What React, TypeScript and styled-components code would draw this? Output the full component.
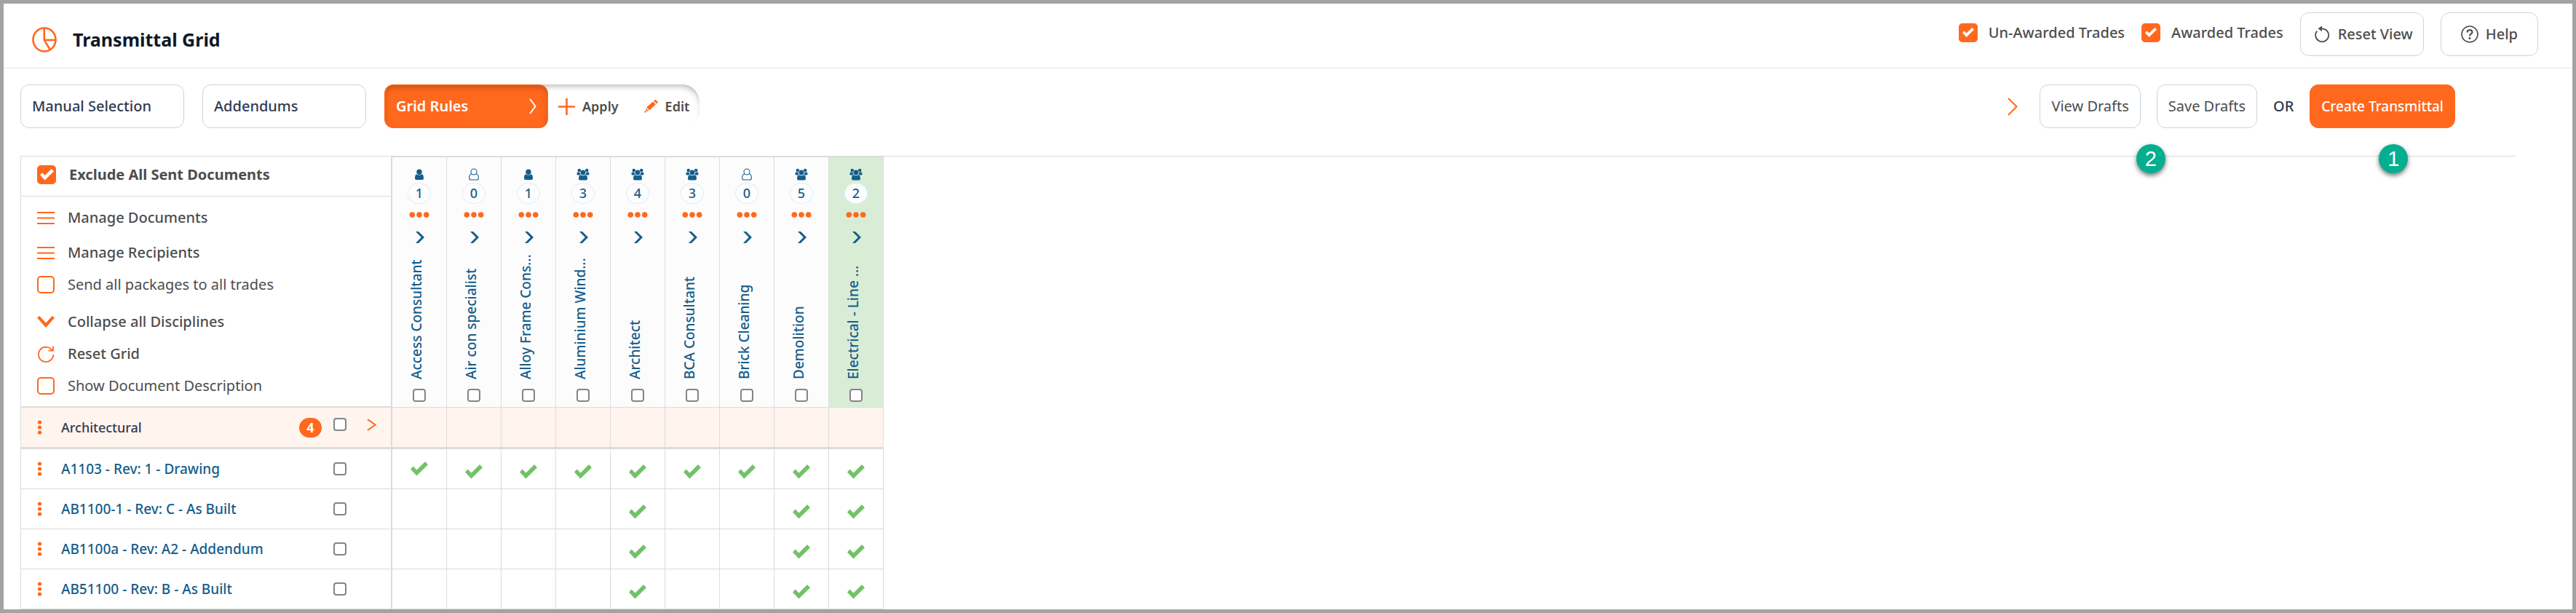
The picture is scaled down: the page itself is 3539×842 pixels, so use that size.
import React from "react";
import styled, { createGlobalStyle } from "styled-components";

const c = {
  orange: "#ff681d",
  navy: "#155d8b",
  ink: "#2f3a52",
  grey: "#4d4d4d",
  line: "#dcdcdc",
  outline: "#cdd2de",
  green: "#72c267",
  teal: "#06ae90",
};

const GlobalStyle = createGlobalStyle`
  *, *::before, *::after { box-sizing: border-box; }
  body {
    margin: 0;
    background: #fff;
    color: ${c.grey};
    font-family: "Noto Sans", "Open Sans", sans-serif;
    font-size: 20px;
    font-weight: 500;
    line-height: 28px;
  }
  button { font: inherit; color: inherit; cursor: pointer; }
  svg { display: block; flex: none; }
`;

const Frame = styled.main`
  min-height: 100vh;
  border: 5px solid #a3a3a3;
`;

/* ---------- header ---------- */

const Header = styled.header`
  display: flex;
  justify-content: space-between;
  padding: 12px 47px 16px 39px;
  border-bottom: 1px solid #e4e4e4;
`;

const Brand = styled.div`
  display: flex;
  align-items: center;
  gap: 22px;
  padding-top: 14px;
`;

const Title = styled.h1`
  margin: 0;
  color: #0e1826;
  font-size: 25px;
  font-weight: 700;
  line-height: 32px;
`;

const HeaderActions = styled.div`
  display: flex;
  align-items: center;
  gap: 23px;
`;

const FilterLabel = styled.label`
  display: flex;
  align-items: center;
  gap: 15px;
  padding-bottom: 4px;
`;

/* ---------- buttons ---------- */

const Button = styled.button<{ $primary?: boolean; $padding?: string }>`
  display: flex;
  align-items: center;
  gap: 10px;
  height: 60px;
  padding: ${(p) => p.$padding ?? "0 15px"};
  border: 1px solid ${(p) => (p.$primary ? c.orange : c.outline)};
  border-radius: 12px;
  background: ${(p) => (p.$primary ? c.orange : "#fff")};
  color: ${(p) => (p.$primary ? "#fff" : c.grey)};
  white-space: nowrap;
`;

const QuietButton = styled(Button)`
  font-weight: 400;
`;

const CreateButton = styled(Button)`
  font-size: 19px;
`;

const ModeButton = styled(Button)<{ $active?: boolean }>`
  position: relative;
  z-index: 1;
  justify-content: space-between;
  width: 225px;
  color: ${(p) => (p.$active ? "#fff" : c.ink)};
  font-weight: ${(p) => (p.$active ? 600 : 500)};
  box-shadow: ${(p) => (p.$active ? "inset 0 5px 8px -2px rgba(90, 40, 10, 0.35)" : "none")};
`;

const BareButton = styled.button`
  display: flex;
  align-items: center;
  padding: 0;
  border: 0;
  background: none;
`;

/* ---------- toolbar ---------- */

const Toolbar = styled.div`
  display: flex;
  justify-content: space-between;
  padding: 22px 161px 38px 23px;
`;

const Modes = styled.div`
  display: flex;
  gap: 25px;
`;

const RuleGroup = styled.div`
  display: flex;
`;

const RuleActions = styled.div`
  display: flex;
  align-items: center;
  gap: 35px;
  margin-left: -20px;
  padding: 0 14px 0 34px;
  border-radius: 0 24px 24px 0;
  box-shadow: inset -3px 8px 9px -6px rgba(0, 0, 0, 0.3);
`;

const RuleAction = styled(BareButton)`
  gap: 10px;
  font-size: 18px;
  font-weight: 600;
`;

const DraftActions = styled.div`
  display: flex;
  align-items: center;
  gap: 22px;
`;

const ExpandButton = styled(BareButton)`
  margin-right: 8px;
`;

const Or = styled.span`
  color: ${c.ink};
`;

const Marked = styled.div`
  position: relative;
`;

const Marker = styled.span<{ $left: number }>`
  position: absolute;
  top: 82px;
  left: ${(p) => p.$left}px;
  width: 40px;
  height: 40px;
  border-radius: 50%;
  background: ${c.teal};
  box-shadow: 0 3px 6px rgba(0, 0, 0, 0.55);
  color: #fff;
  font: 400 29px/41px "Liberation Sans", sans-serif;
  text-align: center;
`;

/* ---------- check boxes ---------- */

const CheckWrap = styled.span`
  display: grid;
  place-items: center;
  flex: none;

  > * { grid-area: 1 / 1; }
  > svg { pointer-events: none; z-index: 1; }
`;

const BrandCheck = styled.input<{ $size: number }>`
  appearance: none;
  width: ${(p) => p.$size}px;
  height: ${(p) => p.$size}px;
  margin: 0;
  border: 2px solid ${c.orange};
  border-radius: 5px;
  background: #fff;

  &:checked { background: ${c.orange}; }
  &:not(:checked) + svg { visibility: hidden; }
`;

const PlainCheck = styled.input`
  appearance: none;
  flex: none;
  width: 18px;
  height: 18px;
  margin: 0;
  border: 2px solid #858585;
  border-radius: 4px;
  background: #fff;

  &:checked { background: ${c.navy}; }
`;

/* ---------- grid ---------- */

const GridArea = styled.section`
  margin: 0 78px 0 23px;
  border-top: 1px solid ${c.line};
`;

const Grid = styled.table`
  width: 1186px;
  table-layout: fixed;
  border-collapse: separate;
  border-spacing: 0;
`;

const LabelCol = styled.col`
  width: 511px;
`;

const PanelCell = styled.td`
  height: 345px;
  padding: 0;
  border: solid ${c.line};
  border-width: 0 2px 2px 1px;
  vertical-align: top;
`;

const ExcludeLabel = styled.label`
  display: flex;
  align-items: center;
  gap: 18px;
  height: 55px;
  padding: 0 22px 4px;
  border-bottom: 1px solid ${c.line};
  font-weight: 700;
`;

const Menu = styled.ul`
  margin: 0;
  padding: 7px 22px 0;
  list-style: none;
`;

const MenuItem = styled.li<{ $gap?: number }>`
  display: flex;
  align-items: center;
  height: 44px;
  margin-top: ${(p) => p.$gap ?? 0}px;
`;

const MenuButton = styled(BareButton)`
  gap: 18px;
`;

const MenuLabel = styled.label`
  display: flex;
  align-items: center;
  gap: 18px;
  font-weight: 400;
`;

const TradeHead = styled.th<{ $highlight: boolean }>`
  padding: 0;
  border: solid ${c.line};
  border-width: 1px 1px 1px 0;
  background: ${(p) => (p.$highlight ? "#d9edd6" : "#fcfcfc")};
  color: ${c.navy};
  font-weight: 500;
  vertical-align: bottom;
`;

const TradeStack = styled.div`
  display: flex;
  flex-direction: column;
  align-items: center;
  padding-bottom: 7px;
`;

const Count = styled.span`
  height: 29px;
  margin: 3px 0 11px;
  padding: 0 10px;
  border: 1px solid #dceffa;
  border-radius: 50%;
  background: #fdfdfe;
  font-size: 18px;
  line-height: 27px;
`;

const ExpandTrade = styled(BareButton)`
  margin: 19px 0 11px 2px;
`;

const TradeName = styled.span`
  height: 176px;
  margin: 0 8px 13px 0;
  font-size: 19px;
  line-height: 24px;
  text-align: left;
  white-space: nowrap;
  writing-mode: vertical-rl;
  transform: rotate(180deg);
`;

const RowHead = styled.th<{ $group?: boolean }>`
  height: ${(p) => (p.$group ? 57 : 55)}px;
  padding: 0 0 0 22px;
  border: solid ${c.line};
  border-width: 0 2px ${(p) => (p.$group ? 3 : 1)}px 1px;
  background: ${(p) => (p.$group ? "#fff4ee" : "#fff")};
  color: ${(p) => (p.$group ? "#343a55" : c.navy)};
  font-size: ${(p) => (p.$group ? 18 : 19)}px;
  font-weight: 500;
  text-align: left;
`;

const RowLine = styled.div`
  display: flex;
  align-items: center;
`;

const RowName = styled.span`
  flex: 1;
  margin-left: 26px;
`;

const RowTools = styled.span<{ $raised?: boolean }>`
  display: flex;
  align-items: center;
  gap: 28px;
  width: 79px;
  margin-left: 16px;
  padding-bottom: ${(p) => (p.$raised ? 8 : 0)}px;
`;

const GroupCount = styled.span`
  width: 31px;
  height: 27px;
  border-radius: 14px;
  background: ${c.orange};
  color: #fff;
  font-size: 18px;
  font-weight: 700;
  line-height: 27px;
  text-align: center;
`;

const Cell = styled.td<{ $group?: boolean; $low?: boolean }>`
  padding: ${(p) => (p.$low ? "8px 0 0" : "0")};
  border: solid ${c.line};
  border-width: 0 1px ${(p) => (p.$group ? 3 : 1)}px 0;
  background: ${(p) => (p.$group ? "#fff4ee" : "#fff")};

  > svg { margin: 0 auto; }
`;

/* ---------- icons ---------- */

const Tick = ({ w, color }: { w: number; color: string }) => (
  <svg width={w} height={(w * 20) / 24} viewBox="0 0 24 20" fill={color}>
    <path d="M0 10.5 3.6 6.6 8.5 11.4 20 0 24 4.2 8.4 19.6Z" />
  </svg>
);

const PieIcon = () => (
  <svg width="34" height="35" viewBox="0 0 34 35" fill="none" stroke={c.orange} strokeWidth="2.6">
    <ellipse cx="17" cy="17.5" rx="15.5" ry="16" />
    <path d="M16.8 1.5V18L24.6 31M16.8 18H32.5" />
  </svg>
);

const UndoIcon = () => (
  <svg width="22" height="24" viewBox="0 0 22 24" fill="none" stroke={c.grey} strokeWidth="1.8">
    <path d="M3.2 7.6A9 9 0 1 0 10 4.3" />
    <path d="M4.6 4.2 10 .6v7.6z" fill={c.grey} stroke="none" />
  </svg>
);

const HelpIcon = () => (
  <svg width="24" height="24" viewBox="0 0 24 24" fill="none" stroke={c.grey} strokeWidth="1.6">
    <circle cx="12" cy="12" r="11" />
    <path d="M8.6 9.4C8.6 5.2 15.4 5.2 15.4 9.2 15.4 11.8 12 11.6 12 14.4" strokeWidth="2.2" />
    <circle cx="12" cy="17.4" r="1.5" fill={c.grey} stroke="none" />
  </svg>
);

const ThinChevron = ({ w, h, color, stroke = 2 }: { w: number; h: number; color: string; stroke?: number }) => (
  <svg width={w} height={h} viewBox={`0 0 ${w} ${h}`} fill="none" stroke={color} strokeWidth={stroke}>
    <path d={`M1 1 ${w - 1.5} ${h / 2} 1 ${h - 1}`} />
  </svg>
);

const PlusIcon = () => (
  <svg width="23" height="23" viewBox="0 0 23 23" fill="none" stroke={c.orange} strokeWidth="2.6">
    <path d="M11.5 0V23M0 11.5H23" />
  </svg>
);

const PencilIcon = () => (
  <svg width="19" height="18" viewBox="0 0 19 18" fill={c.orange}>
    <path d="M3.2 10.6 12 2.4l4 3.8-8.8 8.4zM13 1.5 14.4.3q1-.6 1.8.1l2.2 2.1q.7.9 0 1.7L17 5.4zM2.4 11.6 6.2 15.4 4.4 16 2.2 14zM1.6 14.6 3.6 16.6 0 18z" />
  </svg>
);

const LinesIcon = () => (
  <svg width="24" height="18" viewBox="0 0 24 18" stroke={c.orange} strokeWidth="2">
    <path d="M0 2H24M0 9.5H24M0 17H24" />
  </svg>
);

const DownIcon = () => (
  <svg width="24" height="16" viewBox="0 0 24 16" fill={c.orange}>
    <path d="M0 2.4 3.2 0 12 9.6 20.8 0 24 2.4 12 16z" />
  </svg>
);

const ReloadIcon = () => (
  <svg width="24" height="23" viewBox="0 0 24 23" fill="none" stroke={c.orange} strokeWidth="1.8">
    <path d="M22.3 12A10.2 10.2 0 1 1 19 4.3L21 6.2" />
    <path d="M22 .5V6.6H15.5" />
  </svg>
);

const PersonIcon = () => (
  <svg width="18" height="17" viewBox="0 0 18 17" fill={c.navy}>
    <circle cx="9" cy="5.2" r="3.7" />
    <path d="M5.2 8.2Q9 11 12.8 8.2 15 9 15 14 15 16 13.2 16H4.8Q3 16 3 14 3 9 5.2 8.2z" />
  </svg>
);

const NobodyIcon = () => (
  <svg width="18" height="17" viewBox="0 0 18 17" fill="none" stroke={c.navy} strokeWidth="1.1">
    <circle cx="9" cy="5" r="4" />
    <path d="M6 7.8Q2.6 8.6 2.6 13.4 2.6 16 5 16H13Q15.4 16 15.4 13.4 15.4 8.6 12 7.8" />
  </svg>
);

const PeopleIcon = () => (
  <svg width="18" height="17" viewBox="0 0 18 17" fill={c.navy}>
    <circle cx="3.8" cy="3" r="2.3" />
    <circle cx="14.2" cy="3" r="2.3" />
    <path d="M2 5.2Q4 6.5 5 5.7 4.6 7.8 5.6 8.8L4 9.4H1.6Q.4 9.4.4 8 .4 5.8 2 5.2zM16 5.2Q14 6.5 13 5.7 13.4 7.8 12.4 8.8L14 9.4H16.4Q17.6 9.4 17.6 8 17.6 5.8 16 5.2z" />
    <circle cx="9" cy="6" r="3.4" />
    <path d="M5.8 9.3Q9 11.6 12.2 9.3 15 10 15 14.2 15 16.5 13 16.5H5Q3 16.5 3 14.2 3 10 5.8 9.3z" />
  </svg>
);

const MoreIcon = () => (
  <svg width="28" height="8" viewBox="0 0 28 8" fill={c.orange}>
    <circle cx="4.3" cy="4" r="3.8" />
    <circle cx="14" cy="4" r="3.8" />
    <circle cx="23.7" cy="4" r="3.8" />
  </svg>
);

const GripIcon = () => (
  <svg width="7" height="20" viewBox="0 0 7 20" fill={c.orange}>
    <circle cx="3.5" cy="3" r="2.6" />
    <circle cx="3.5" cy="10" r="2.6" />
    <circle cx="3.5" cy="17" r="2.6" />
  </svg>
);

const TradeChevron = () => (
  <svg width="12" height="16" viewBox="0 0 12 16" fill={c.navy}>
    <path d="M0 0H4L12 8 4 16H0L7.8 8z" />
  </svg>
);

/* ---------- data ---------- */

const trades: { name: string; people: number }[] = [
  { name: "Access Consultant", people: 1 },
  { name: "Air con specialist", people: 0 },
  { name: "Alloy Frame Cons...", people: 1 },
  { name: "Aluminium Wind...", people: 3 },
  { name: "Architect", people: 4 },
  { name: "BCA Consultant", people: 3 },
  { name: "Brick Cleaning", people: 0 },
  { name: "Demolition", people: 5 },
  { name: "Electrical - Line ...", people: 2 },
];

const HIGHLIGHTED = 8;

const documents: { name: string; sent: number[] }[] = [
  { name: "A1103 - Rev: 1 - Drawing", sent: [0, 1, 2, 3, 4, 5, 6, 7, 8] },
  { name: "AB1100-1 - Rev: C - As Built", sent: [4, 7, 8] },
  { name: "AB1100a - Rev: A2 - Addendum", sent: [4, 7, 8] },
  { name: "AB51100 - Rev: B - As Built", sent: [4, 7, 8] },
];

const Check = ({ size, tick, checked }: { size: number; tick: number; checked?: boolean }) => (
  <CheckWrap>
    <BrandCheck type="checkbox" $size={size} defaultChecked={checked} />
    <Tick w={tick} color="#fff" />
  </CheckWrap>
);

const peopleIcon = (n: number) => (n === 0 ? <NobodyIcon /> : n === 1 ? <PersonIcon /> : <PeopleIcon />);

export default function App() {
  return (
    <>
      <GlobalStyle />
      <Frame>
        <Header>
          <Brand>
            <PieIcon />
            <Title>Transmittal Grid</Title>
          </Brand>
          <HeaderActions>
            <FilterLabel>
              <Check size={26} tick={16} checked />
              Un-Awarded Trades
            </FilterLabel>
            <FilterLabel>
              <Check size={26} tick={16} checked />
              Awarded Trades
            </FilterLabel>
            <Button $padding="0 14px 0 19px">
              <UndoIcon />
              Reset View
            </Button>
            <Button $padding="0 27px">
              <HelpIcon />
              Help
            </Button>
          </HeaderActions>
        </Header>

        <Toolbar>
          <Modes>
            <ModeButton>Manual Selection</ModeButton>
            <ModeButton>Addendums</ModeButton>
            <RuleGroup>
              <ModeButton $primary $active>
                Grid Rules
                <ThinChevron w={10} h={22} color="#fff" />
              </ModeButton>
              <RuleActions>
                <RuleAction>
                  <PlusIcon />
                  Apply
                </RuleAction>
                <RuleAction>
                  <PencilIcon />
                  Edit
                </RuleAction>
              </RuleActions>
            </RuleGroup>
          </Modes>
          <DraftActions>
            <ExpandButton aria-label="Expand">
              <ThinChevron w={14} h={25} color={c.orange} />
            </ExpandButton>
            <QuietButton>View Drafts</QuietButton>
            <Marked>
              <QuietButton>Save Drafts</QuietButton>
              <Marker $left={-28}>2</Marker>
            </Marked>
            <Or>OR</Or>
            <Marked>
              <CreateButton $primary>Create Transmittal</CreateButton>
              <Marker $left={95}>1</Marker>
            </Marked>
          </DraftActions>
        </Toolbar>

        <GridArea>
          <Grid>
            <colgroup>
              <LabelCol />
              {trades.map((t) => (
                <col key={t.name} />
              ))}
            </colgroup>
            <thead>
              <tr>
                <PanelCell>
                  <ExcludeLabel>
                    <Check size={26} tick={19} checked />
                    Exclude All Sent Documents
                  </ExcludeLabel>
                  <Menu>
                    <MenuItem>
                      <MenuButton>
                        <LinesIcon />
                        Manage Documents
                      </MenuButton>
                    </MenuItem>
                    <MenuItem $gap={4}>
                      <MenuButton>
                        <LinesIcon />
                        Manage Recipients
                      </MenuButton>
                    </MenuItem>
                    <MenuItem>
                      <MenuLabel>
                        <Check size={24} tick={16} />
                        Send all packages to all trades
                      </MenuLabel>
                    </MenuItem>
                    <MenuItem $gap={7}>
                      <MenuButton>
                        <DownIcon />
                        Collapse all Disciplines
                      </MenuButton>
                    </MenuItem>
                    <MenuItem>
                      <MenuButton>
                        <ReloadIcon />
                        Reset Grid
                      </MenuButton>
                    </MenuItem>
                    <MenuItem>
                      <MenuLabel>
                        <Check size={24} tick={16} />
                        Show Document Description
                      </MenuLabel>
                    </MenuItem>
                  </Menu>
                </PanelCell>
                {trades.map((t, i) => (
                  <TradeHead key={t.name} scope="col" $highlight={i === HIGHLIGHTED}>
                    <TradeStack>
                      {peopleIcon(t.people)}
                      <Count>{t.people}</Count>
                      <BareButton aria-label={`Options for ${t.name}`}>
                        <MoreIcon />
                      </BareButton>
                      <ExpandTrade aria-label={`Expand ${t.name}`}>
                        <TradeChevron />
                      </ExpandTrade>
                      <TradeName>{t.name}</TradeName>
                      <PlainCheck type="checkbox" aria-label={`Select ${t.name}`} />
                    </TradeStack>
                  </TradeHead>
                ))}
              </tr>
            </thead>
            <tbody>
              <tr>
                <RowHead scope="row" $group>
                  <RowLine>
                    <BareButton aria-label="Architectural options">
                      <GripIcon />
                    </BareButton>
                    <RowName>Architectural</RowName>
                    <GroupCount>4</GroupCount>
                    <RowTools $raised>
                      <PlainCheck type="checkbox" aria-label="Select Architectural" />
                      <BareButton aria-label="Expand Architectural">
                        <ThinChevron w={13} h={17} color={c.orange} stroke={2} />
                      </BareButton>
                    </RowTools>
                  </RowLine>
                </RowHead>
                {trades.map((t) => (
                  <Cell key={t.name} $group />
                ))}
              </tr>
              {documents.map((d) => (
                <tr key={d.name}>
                  <RowHead scope="row">
                    <RowLine>
                      <BareButton aria-label={`${d.name} options`}>
                        <GripIcon />
                      </BareButton>
                      <RowName>{d.name}</RowName>
                      <RowTools>
                        <PlainCheck type="checkbox" aria-label={`Select ${d.name}`} />
                      </RowTools>
                    </RowLine>
                  </RowHead>
                  {trades.map((t, i) => (
                    <Cell key={t.name} $low={i > 0}>
                      {d.sent.includes(i) && <Tick w={24} color={c.green} />}
                    </Cell>
                  ))}
                </tr>
              ))}
            </tbody>
          </Grid>
        </GridArea>
      </Frame>
    </>
  );
}
